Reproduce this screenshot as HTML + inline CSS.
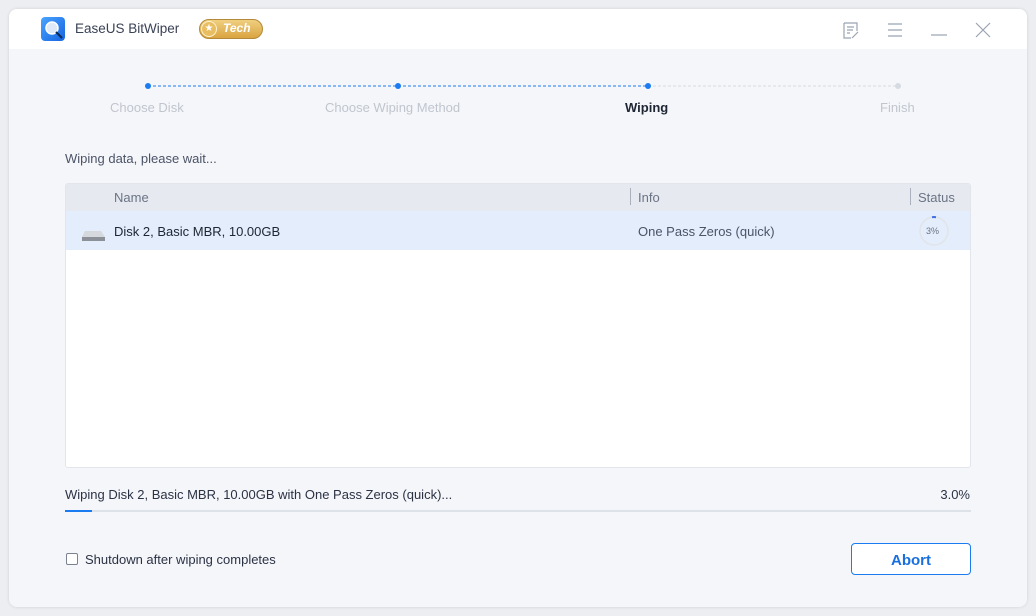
<!DOCTYPE html>
<html><head><meta charset="utf-8"><style>
*{margin:0;padding:0;box-sizing:border-box}
body{width:1036px;height:616px;background:#eceef2;font-family:"Liberation Sans",sans-serif;position:relative;overflow:hidden}
.win{position:absolute;left:9px;top:9px;width:1018px;height:598px;background:#f5f6fa;border-radius:8px;overflow:hidden;box-shadow:0 0 3px rgba(0,0,0,.12)}
.tb{position:absolute;left:0;top:0;width:100%;height:40px;background:#fff}
.a{position:absolute;white-space:nowrap}
.t{font-size:13px}
</style></head><body>
<div class="win">
<div class="tb"></div>
</div>
<div class="a" style="left:41px;top:17px;width:24px;height:24px;border-radius:4px;background:linear-gradient(135deg,#4aa3ff,#1565e0)"></div>
<svg class="a" style="left:41px;top:17px" width="24" height="24"><circle cx="11" cy="11" r="6" fill="#dfe9f8" stroke="#fff" stroke-width="1.5"/><line x1="15" y1="15" x2="21" y2="21" stroke="#0d2a55" stroke-width="2"/></svg>
<div class="a" style="left:75px;top:21px;font-size:13.5px;color:#3a4256">EaseUS BitWiper</div>
<div class="a" style="left:199px;top:19px;width:64px;height:20px;border-radius:10px;background:linear-gradient(#f0cf80,#d9a440);border:1px solid #b48a3a"></div>
<div class="a" style="left:201px;top:21px;width:16px;height:16px;border-radius:8px;background:#e9be63;border:1px solid #fff3d0;color:#fff;font-size:10px;text-align:center;line-height:14px">★</div>
<div class="a" style="left:223px;top:21px;font-size:12px;font-weight:bold;font-style:italic;color:#fff">Tech</div>
<svg class="a" style="left:843px;top:22px" width="18" height="18" fill="none" stroke="#9aa3b2" stroke-width="1.2"><path d="M1 1H14V9M1 1V16H8M4 5H11M4 8H10M4 11H7M9 16L15 10"/></svg>
<svg class="a" style="left:887px;top:23px" width="16" height="14" stroke="#9aa3b2" stroke-width="1.2"><path d="M1 1H15M1 7H15M1 13H15"/></svg>
<svg class="a" style="left:930px;top:34px" width="18" height="3" stroke="#9aa3b2" stroke-width="1.2"><path d="M1 1H17"/></svg>
<svg class="a" style="left:975px;top:22px" width="16" height="16" stroke="#9aa3b2" stroke-width="1.2"><path d="M1 1L15 15M15 1L1 15"/></svg>
<svg class="a" style="left:140px;top:80px" width="770" height="12">
<line x1="8" y1="6" x2="508" y2="6" stroke="#1a7cf0" stroke-dasharray="3 2"/>
<line x1="508" y1="6" x2="758" y2="6" stroke="#d6dae2" stroke-dasharray="3 2"/>
<circle cx="8" cy="6" r="3" fill="#1a7cf0"/><circle cx="258" cy="6" r="3" fill="#1a7cf0"/><circle cx="508" cy="6" r="3" fill="#1a7cf0"/><circle cx="758" cy="6" r="3" fill="#d6dae2"/></svg>
<div class="a t" style="left:110px;top:100px;color:#c0c5ce">Choose Disk</div>
<div class="a t" style="left:325px;top:100px;color:#c0c5ce">Choose Wiping Method</div>
<div class="a t" style="left:625px;top:100px;color:#1e2533;font-weight:bold">Wiping</div>
<div class="a t" style="left:880px;top:100px;color:#c0c5ce">Finish</div>
<div class="a t" style="left:65px;top:151px;color:#4b5366">Wiping data, please wait...</div>
<div class="a" style="left:65px;top:183px;width:906px;height:285px;background:#fff;border:1px solid #e2e6ec;border-radius:3px"></div>
<div class="a" style="left:66px;top:184px;width:904px;height:27px;background:#e6eaf0"></div>
<div class="a" style="left:66px;top:211px;width:904px;height:39px;background:#e3edfb"></div>
<div class="a t" style="left:114px;top:190px;color:#6b7385">Name</div>
<div class="a" style="left:630px;top:188px;width:1px;height:17px;background:#aab1bd"></div>
<div class="a t" style="left:638px;top:190px;color:#6b7385">Info</div>
<div class="a" style="left:910px;top:188px;width:1px;height:17px;background:#aab1bd"></div>
<div class="a t" style="left:918px;top:190px;color:#6b7385">Status</div>
<svg class="a" style="left:81px;top:229px" width="26" height="14"><path d="M4 2H20L24 8H1Z" fill="#d5d8dd"/><rect x="1" y="8" width="23" height="4" fill="#8b9099"/></svg>
<div class="a t" style="left:114px;top:224px;color:#1e2533">Disk 2, Basic MBR, 10.00GB</div>
<div class="a t" style="left:638px;top:224px;color:#4b5366">One Pass Zeros (quick)</div>
<svg class="a" style="left:918px;top:215px" width="32" height="32"><circle cx="16" cy="16" r="14" fill="none" stroke="#e2e4e8" stroke-width="1.5"/><path d="M14 2.2A14 14 0 0 1 18 2.2" stroke="#3f6ee0" stroke-width="2" fill="none"/></svg>
<div class="a" style="left:926px;top:226px;font-size:9px;color:#6b7385">3%</div>
<div class="a t" style="left:65px;top:487px;color:#2b3244">Wiping Disk 2, Basic MBR, 10.00GB with One Pass Zeros (quick)...</div>
<div class="a t" style="right:66px;top:487px;color:#2b3244">3.0%</div>
<div class="a" style="left:65px;top:510px;width:906px;height:2px;background:#dde1e8"></div>
<div class="a" style="left:65px;top:510px;width:27px;height:2px;background:#1a7cf0"></div>
<div class="a" style="left:66px;top:553px;width:12px;height:12px;border:1px solid #7a8190;border-radius:2px;background:#fff"></div>
<div class="a t" style="left:85px;top:552px;color:#2b3244">Shutdown after wiping completes</div>
<div class="a" style="left:851px;top:543px;width:120px;height:32px;border:1px solid #1a7cf0;border-radius:4px;background:#fff;color:#1a6fe0;font-size:15px;font-weight:bold;text-align:center;line-height:33px">Abort</div>
</body></html>
